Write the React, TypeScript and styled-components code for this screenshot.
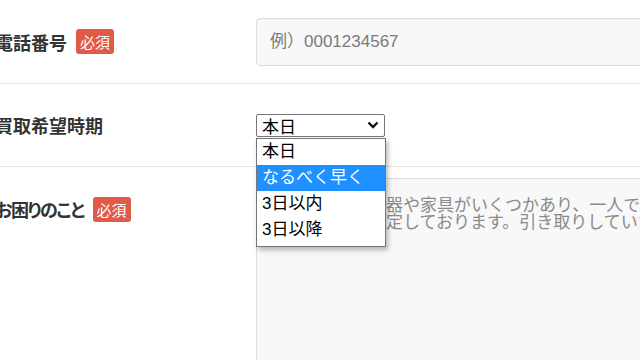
import React from "react";
import { createGlobalStyle, styled } from "styled-components";

const GlobalStyle = createGlobalStyle`
  html, body {
    margin: 0;
    padding: 0;
    background: #fff;
    overflow: hidden;
  }
  body {
    font-family: "Liberation Sans", "Noto Sans CJK JP", sans-serif;
    color: #333;
  }
`;

const Form = styled.div`
  margin-left: -5px;
  width: 1100px;
`;

const Row = styled.div<{ $top?: boolean; $height?: number }>`
  display: grid;
  grid-template-columns: 261px 1fr;
  align-items: ${(p) => (p.$top ? "start" : "center")};
  box-sizing: border-box;
  height: ${(p) => (p.$height ? `${p.$height}px` : "auto")};
  padding: ${(p) => (p.$top ? "11px 0 0" : "0")};
  border-bottom: 1px solid #e3e3e3;
`;

const Label = styled.div<{ $offset?: number; $tight?: boolean }>`
  display: flex;
  align-items: center;
  gap: 9px;
  margin-top: ${(p) => p.$offset ?? 0}px;
  font-family: "Noto Sans CJK JP", sans-serif;
  font-size: 18px;
  font-weight: 700;
  font-feature-settings: "palt";
  letter-spacing: ${(p) => (p.$tight ? "-1.5px" : "0")};
  color: #333;
  line-height: 26px;
`;

const Badge = styled.span`
  display: inline-block;
  height: 25px;
  line-height: 25px;
  padding: 0 4px;
  border-radius: 3px;
  background: #df5b48;
  color: #fff;
  font-size: 15px;
  font-weight: 400;
  letter-spacing: 0;
  font-feature-settings: normal;
`;

const TextInput = styled.input`
  box-sizing: border-box;
  width: 100%;
  height: 48px;
  padding: 0 13px;
  border: 1px solid #dcdcdc;
  border-radius: 4px;
  background: #f8f8f8;
  box-shadow: inset 0 1px 2px rgba(0, 0, 0, 0.04);
  font-family: "Liberation Sans", "Noto Sans CJK JP", sans-serif;
  font-size: 17px;
  outline: none;

  &::placeholder {
    color: #7a7a7a;
  }
`;

const SelectWrap = styled.div`
  position: relative;
  width: 129px;
`;

const SelectBox = styled.div`
  box-sizing: border-box;
  display: flex;
  align-items: center;
  justify-content: space-between;
  height: 23px;
  padding: 0 5px;
  border: 1px solid #767676;
  border-radius: 2px;
  background: #fff;
  color: #000;
  font-family: "Liberation Sans", "Noto Sans CJK JP", sans-serif;
  font-size: 17px;
`;

const OptionList = styled.ul`
  position: absolute;
  top: 24px;
  left: 0;
  z-index: 5;
  box-sizing: border-box;
  width: 130px;
  margin: 0;
  padding: 0 0 3px;
  list-style: none;
  border: 1px solid #767676;
  background: #fff;
  box-shadow: 2px 3px 5px rgba(0, 0, 0, 0.28);
`;

const OptionItem = styled.li<{ $active?: boolean }>`
  height: 26px;
  line-height: 26px;
  padding: 0 5px;
  font-family: "Liberation Sans", "Noto Sans CJK JP", sans-serif;
  font-size: 17px;
  color: ${(p) => (p.$active ? "#fff" : "#000")};
  background: ${(p) => (p.$active ? "#1e90ff" : "transparent")};
  white-space: nowrap;
`;

const TextArea = styled.textarea`
  box-sizing: border-box;
  width: 100%;
  height: 220px;
  padding: 16px 10px;
  border: 1px solid #dcdcdc;
  border-radius: 4px;
  background: #f8f8f8;
  font-family: "Noto Sans CJK JP", sans-serif;
  font-size: 17px;
  line-height: 17px;
  resize: none;
  outline: none;

  &::placeholder {
    color: #8a8a8a;
  }
`;

const Chevron = () => (
  <svg width="12" height="8" viewBox="0 0 12 8">
    <polyline points="1.5,1.5 6,6 10.5,1.5" fill="none" stroke="#111" strokeWidth="2.4" />
  </svg>
);

const options = ["本日", "なるべく早く", "3日以内", "3日以降"];

export default function App() {
  return (
    <>
      <GlobalStyle />
      <Form>
        <Row $height={84}>
          <Label>
            電話番号<Badge>必須</Badge>
          </Label>
          <TextInput placeholder="例）0001234567" />
        </Row>
        <Row $height={83}>
          <Label>買取希望時期</Label>
          <SelectWrap>
            <SelectBox>
              <span>本日</span>
              <Chevron />
            </SelectBox>
            <OptionList>
              {options.map((o) => (
                <OptionItem key={o} $active={o === "なるべく早く"}>
                  {o}
                </OptionItem>
              ))}
            </OptionList>
          </SelectWrap>
        </Row>
        <Row $top>
          <Label $offset={18} $tight>
            お困りのこと<Badge>必須</Badge>
          </Label>
          <TextArea
            readOnly
            placeholder={
              "例）使わない食器や家具がいくつかあり、一人では運び出せません。\n来月引越しを予定しております。引き取りしていただけると助かります。"
            }
          />
        </Row>
      </Form>
    </>
  );
}
